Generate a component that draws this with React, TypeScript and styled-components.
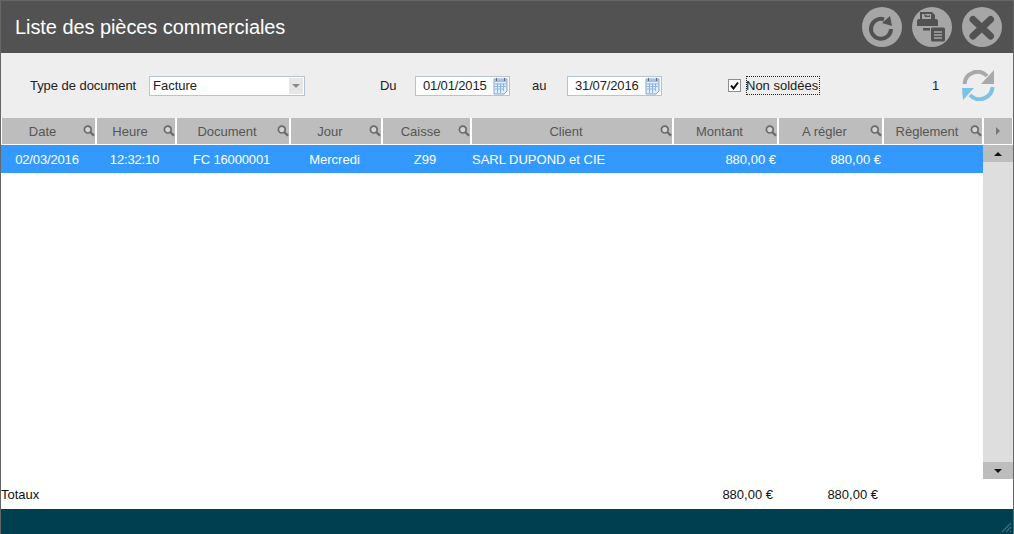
import React from 'react';
import styled, { createGlobalStyle } from 'styled-components';

const GlobalStyle = createGlobalStyle`
  html, body { margin: 0; padding: 0; background: #fff; }
  body { font-family: "Liberation Sans", Arial, sans-serif; }
`;

const Window = styled.div`
  width: 1014px;
  height: 534px;
  box-sizing: border-box;
  border-left: 1px solid #666;
  border-right: 1px solid #666;
  display: flex;
  flex-direction: column;
  overflow: hidden;
  background: #fff;
`;

const TitleBar = styled.header`
  height: 53px;
  flex: none;
  box-sizing: border-box;
  background: #525252;
  border-top: 1px solid #666;
  display: flex;
  align-items: center;
  padding: 0 11px 0 14px;
`;

const Title = styled.h1`
  flex: 1;
  margin: 0;
  font-size: 20px;
  font-weight: 400;
  letter-spacing: -0.07px;
  color: #fff;
`;

const RoundButtons = styled.div`
  display: flex;
  gap: 10px;
`;

const RoundButton = styled.button`
  width: 40px;
  height: 40px;
  padding: 0;
  border: 0;
  border-radius: 50%;
  background: #a6a6a6;
  display: flex;
  align-items: center;
  justify-content: center;
`;

const FilterBar = styled.div`
  height: 65px;
  flex: none;
  box-sizing: border-box;
  background: #eee;
  display: flex;
  align-items: center;
  padding: 0 0 0 29px;
  font-size: 13px;
  color: #222;
`;

const FilterLabel = styled.span<{ $width: number; $left?: number }>`
  width: ${props => props.$width}px;
  margin-left: ${props => props.$left || 0}px;
  flex: none;
  letter-spacing: -0.05px;
  white-space: nowrap;
`;

const SelectBox = styled.div`
  width: 156px;
  height: 20px;
  flex: none;
  box-sizing: border-box;
  border: 1px solid #b5c4d3;
  background: #fff;
  display: flex;
  align-items: center;
  justify-content: space-between;
  padding: 0 1px 0 3px;
`;

const SelectArrow = styled.span`
  width: 14px;
  height: 16px;
  background: #e6e6e6;
  display: flex;
  align-items: center;
  justify-content: center;
  &::after {
    content: '';
    border-left: 4px solid transparent;
    border-right: 4px solid transparent;
    border-top: 4px solid #8a8a8a;
  }
`;

const DateBox = styled.div`
  width: 95px;
  height: 20px;
  flex: none;
  box-sizing: border-box;
  border: 1px solid #b5c4d3;
  background: #fff;
  display: flex;
  align-items: center;
  justify-content: space-between;
  padding: 0 1px 0 7px;
  letter-spacing: -0.15px;
`;

const CheckBox = styled.span`
  width: 13px;
  height: 13px;
  flex: none;
  margin: 0 5px 0 66px;
  box-sizing: border-box;
  border: 1px solid #8e8e8e;
  background: #fff;
  display: flex;
  align-items: center;
  justify-content: center;
`;

const FocusLabel = styled.span`
  width: 74px;
  flex: none;
  box-sizing: border-box;
  outline: 1px dotted #222;
  outline-offset: -1px;
  padding: 2px 0 2px 0;
  white-space: nowrap;
`;

const Counter = styled.span`
  width: 30px;
  margin-left: 112px;
  flex: none;
`;

const TableHead = styled.div`
  height: 26px;
  flex: none;
  margin: 0 1px 1px 1px;
  display: grid;
  grid-template-columns: 93px 78px 112px 90px 87px 200px 103px 103px 98px 28px;
  gap: 2px;
  font-size: 13px;
  color: #555;
`;

const HeadCell = styled.div`
  background: #bdbdbd;
  display: flex;
  align-items: center;
`;

const HeadLabel = styled.span`
  flex: 1;
  text-align: center;
  white-space: nowrap;
`;

const HeadIcon = styled.span`
  width: 12px;
  height: 26px;
  flex: none;
  display: flex;
  padding-top: 7px;
  box-sizing: border-box;
`;

const HeadArrow = styled(HeadCell)`
  justify-content: center;
  &::after {
    content: '';
    border-top: 4px solid transparent;
    border-bottom: 4px solid transparent;
    border-left: 4px solid #777;
  }
`;

const TableBody = styled.div`
  flex: 1;
  min-height: 0;
  display: flex;
`;

const Rows = styled.div`
  flex: 1;
  min-width: 0;
`;

const Row = styled.div`
  height: 28px;
  background: #3399ff;
  color: #fff;
  font-size: 13px;
  display: grid;
  grid-template-columns: 95px 80px 114px 92px 89px 202px 105px 105px 98px;
  align-items: center;
`;

const Cell = styled.span<{ $align?: 'left' | 'center' | 'right'; $digits?: boolean }>`
  text-align: ${props => props.$align || 'center'};
  padding-right: ${props => (props.$align === 'right' ? '2px' : props.$align === 'left' ? '0' : '3px')};
  padding-left: ${props => (props.$align === 'left' ? '1px' : '0')};
  letter-spacing: ${props => (props.$digits ? '-0.15px' : '0')};
  white-space: nowrap;
`;

const ScrollBar = styled.div`
  width: 30px;
  flex: none;
  background: #dedede;
  display: flex;
  flex-direction: column;
  justify-content: space-between;
`;

const ScrollButton = styled.div<{ $down?: boolean }>`
  height: 17px;
  background: #bdbdbd;
  display: flex;
  align-items: center;
  justify-content: center;
  &::after {
    content: '';
    border-left: 4px solid transparent;
    border-right: 4px solid transparent;
    ${props => (props.$down ? 'border-top: 4px solid #111;' : 'border-bottom: 4px solid #111;')}
  }
`;

const Totals = styled.div`
  height: 30px;
  flex: none;
  display: grid;
  grid-template-columns: 669px 103px 105px;
  align-items: center;
  font-size: 13px;
  color: #111;
`;

const TotalAmount = styled.span`
  text-align: right;
`;

const Footer = styled.footer`
  height: 25px;
  flex: none;
  box-sizing: border-box;
  background: #003f4f;
  display: flex;
  justify-content: flex-end;
  align-items: flex-end;
  padding: 0 1px 1px 0;
`;

const SearchIcon = () => (
  <svg width="12" height="12" viewBox="0 0 12 12" fill="none">
    <circle cx="4.8" cy="4.6" r="3.4" stroke="#6a6a6a" strokeWidth="1.7" fill="#d4d4d4" />
    <line x1="7.4" y1="7.2" x2="11" y2="10.6" stroke="#6a6a6a" strokeWidth="2.2" />
  </svg>
);

const CalendarIcon = () => (
  <svg width="15" height="18" viewBox="0 0 15 18">
    <path d="M1 2h13v12l-3 3H1z" fill="#e4eefa" stroke="#7da3cc" strokeWidth="1" />
    <rect x="1.5" y="2.5" width="12" height="2.5" fill="#9cc0e6" />
    <path d="M3.5 1v3M11.5 1v3" stroke="#667" strokeWidth="1" />
    <path d="M2 7h11M2 9.5h11M2 12h9M4.5 6v10M7.5 6v10M10.5 6v8" stroke="#8fb6e0" strokeWidth="1" />
  </svg>
);

const ReloadIcon = () => (
  <svg width="40" height="40" viewBox="0 0 40 40" fill="none">
    <path d="M22 12.3A10 10 0 1 0 29 22" stroke="#525252" strokeWidth="4" />
    <path d="M28 9l2 10-10-3z" fill="#525252" />
  </svg>
);

const PrintDocIcon = () => (
  <svg width="40" height="40" viewBox="0 0 40 40">
    <path d="M8 5h12l3 3v5H8z" fill="#525252" />
    <path d="M10 7h9v5h-9z" fill="#a6a6a6" />
    <path d="M12 7l4 2 2-1v2h-5z" fill="#525252" />
    <path d="M7 12h17a2 2 0 0 1 2 2v5H5v-5a2 2 0 0 1 2-2z" fill="#525252" />
    <rect x="11" y="21" width="7" height="2.5" fill="#525252" />
    <rect x="19" y="20.5" width="14" height="14" rx="1.5" fill="#525252" />
    <path d="M22 25h8M22 28h8M22 31h8" stroke="#a6a6a6" strokeWidth="1.4" />
  </svg>
);

const CloseIcon = () => (
  <svg width="40" height="40" viewBox="0 0 40 40">
    <path d="M11 12.5L28.5 29M28.5 12.5L11 29" stroke="#525252" strokeWidth="7" strokeLinecap="round" />
  </svg>
);

const RefreshIcon = () => (
  <svg width="33" height="31" viewBox="0 0 33 31" fill="none">
    <path d="M2.5 14A13 13 0 0 1 25 6" stroke="#a9a9a9" strokeWidth="4" />
    <path d="M32 0v14H19z" fill="#a9a9a9" />
    <path d="M30.5 17A13 13 0 0 1 8 25" stroke="#7cc1e6" strokeWidth="4" />
    <path d="M0 18h12L1 30z" fill="#7cc1e6" />
  </svg>
);

const columns = ['Date', 'Heure', 'Document', 'Jour', 'Caisse', 'Client', 'Montant', 'A régler', 'Règlement'];

export default function App() {
  return (
    <Window>
      <GlobalStyle />
      <TitleBar>
        <Title>Liste des pièces commerciales</Title>
        <RoundButtons>
          <RoundButton aria-label="Actualiser"><ReloadIcon /></RoundButton>
          <RoundButton aria-label="Imprimer"><PrintDocIcon /></RoundButton>
          <RoundButton aria-label="Fermer"><CloseIcon /></RoundButton>
        </RoundButtons>
      </TitleBar>

      <FilterBar>
        <FilterLabel $width={119}>Type de document</FilterLabel>
        <SelectBox>Facture<SelectArrow /></SelectBox>
        <FilterLabel $width={35} $left={75}>Du</FilterLabel>
        <DateBox>01/01/2015<CalendarIcon /></DateBox>
        <FilterLabel $width={35} $left={22}>au</FilterLabel>
        <DateBox>31/07/2016<CalendarIcon /></DateBox>
        <CheckBox>
          <svg width="9" height="9" viewBox="0 0 9 9"><path d="M1 4.5l2.5 3L8 1.5" fill="none" stroke="#111" strokeWidth="2" /></svg>
        </CheckBox>
        <FocusLabel>Non soldées</FocusLabel>
        <Counter>1</Counter>
        <RefreshIcon />
      </FilterBar>

      <TableHead>
        {columns.map(name => (
          <HeadCell key={name}>
            <HeadLabel>{name}</HeadLabel>
            <HeadIcon><SearchIcon /></HeadIcon>
          </HeadCell>
        ))}
        <HeadArrow />
      </TableHead>

      <TableBody>
        <Rows>
          <Row>
            <Cell $digits>02/03/2016</Cell>
            <Cell $digits>12:32:10</Cell>
            <Cell $digits>FC 16000001</Cell>
            <Cell>Mercredi</Cell>
            <Cell>Z99</Cell>
            <Cell $align="left">SARL DUPOND et CIE</Cell>
            <Cell $align="right">880,00 €</Cell>
            <Cell $align="right">880,00 €</Cell>
            <Cell />
          </Row>
        </Rows>
        <ScrollBar>
          <ScrollButton />
          <ScrollButton $down />
        </ScrollBar>
      </TableBody>

      <Totals>
        <span>Totaux</span>
        <TotalAmount>880,00 €</TotalAmount>
        <TotalAmount>880,00 €</TotalAmount>
      </Totals>

      <Footer>
        <svg width="11" height="11" viewBox="0 0 11 11">
          <path d="M1 10L10 1M5 10l5-5M9 10l1-1" stroke="#3f6f7b" strokeWidth="1.2" />
        </svg>
      </Footer>
    </Window>
  );
}
